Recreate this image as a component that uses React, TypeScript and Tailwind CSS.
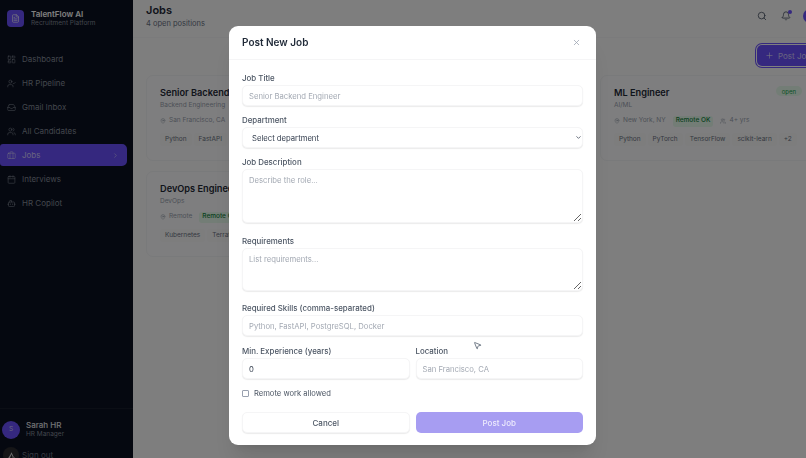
import { Bell, Bot, Briefcase, Calendar, ChevronDown, ChevronRight, FileText, Inbox, LayoutDashboard, MapPin, MousePointer2, Plus, Search, UserCheck, Users, X } from 'lucide-react';

const navItems = [
  { label: 'Dashboard', icon: LayoutDashboard },
  { label: 'HR Pipeline', icon: UserCheck },
  { label: 'Gmail Inbox', icon: Inbox },
  { label: 'All Candidates', icon: Users },
  { label: 'Jobs', icon: Briefcase, active: true },
  { label: 'Interviews', icon: Calendar },
  { label: 'HR Copilot', icon: Bot },
];

function Sidebar() {
  return (
    <aside className="w-[133px] h-[472px] shrink-0 bg-[#0a1020] flex flex-col">
      <div className="flex items-center gap-[7px] pl-[7px] h-[36px]">
        <div className="w-[17px] h-[17px] rounded-[4px] bg-[#6a50ff] flex items-center justify-center">
          <FileText size={9} className="text-white/80" />
        </div>
        <div>
          <div className="text-[8px] leading-[10px] font-semibold text-white">TalentFlow AI</div>
          <div className="text-[6.5px] leading-[9px] text-[#858c99]">Recruitment Platform</div>
        </div>
      </div>

      <nav className="flex-1 pt-[12px] pr-[6px]">
        {navItems.map((item) => (
          <div
            key={item.label}
            className={`h-[22px] mb-[2px] flex items-center gap-[6px] pl-[7px] pr-[8px] rounded-r-[5px] rounded-l-[3px] text-[8px] ${
              item.active ? 'bg-[#6a50ff] text-white/70' : 'text-[#858c99]'
            }`}
          >
            <item.icon size={9} strokeWidth={1.5} />
            <span className="flex-1">{item.label}</span>
            {item.active && <ChevronRight size={7} />}
          </div>
        ))}
      </nav>

      <div className="h-[64px] border-t border-white/5 pl-[2px]">
        <div className="flex items-center gap-[6px] pt-[11px]">
          <div className="w-[18px] h-[18px] rounded-full bg-[#6a50ff] text-white/70 text-[6.5px] flex items-center justify-center">S</div>
          <div>
            <div className="text-[8px] leading-[10px] font-medium text-gray-200">Sarah HR</div>
            <div className="text-[6.5px] leading-[9px] text-[#858c99]">HR Manager</div>
          </div>
        </div>
        <div className="flex items-center gap-[3px] mt-[8px]">
          <div className="w-[16px] h-[16px] rounded-full bg-[#2a2a2e] flex items-center justify-center ml-[1px]">
            <svg width="9" height="9" viewBox="0 0 12 12" fill="#d8d8d8">
              <path d="M6 1.5 9 8H7.6L6 4.4 3.9 9.5H1.5L4.6 4.5zM7 8.5h3.5v1.2H7z" />
            </svg>
          </div>
          <span className="text-[8px] text-gray-500">Sign out</span>
        </div>
      </div>
    </aside>
  );
}

function Tag({ children }: { children: React.ReactNode }) {
  return <span className="px-[5px] h-[13px] flex items-center rounded-[3px] bg-[#fafafa] text-[6.5px] text-gray-500">{children}</span>;
}

function JobCard({ title, dept, location, remote, years, tags, status }: { title: string; dept: string; location: string; remote?: boolean; years?: string; tags: string[]; status?: boolean }) {
  return (
    <div className="h-[86px] border border-gray-100 rounded-[7px] bg-[#fdfdfe] pl-[13px] pr-[12px] pt-[10px] whitespace-nowrap">
      <div className="flex justify-between items-start">
        <div className="text-[9.2px] leading-[13px] font-semibold text-[#1f2937]">{title}</div>
        {status && <span className="px-[6px] h-[10px] flex items-center rounded-full bg-[#e6fbec] text-[6px] text-[#16a34a]">open</span>}
      </div>
      <div className="text-[6.5px] leading-[10px] mt-[1px] text-gray-400">{dept}</div>
      <div className="flex items-center gap-[3px] mt-[5px] h-[12px] text-[6.5px] text-gray-400">
        <MapPin size={6} />
        <span>{location}</span>
        {remote && <span className="ml-[4px] mr-[4px] px-[3px] h-[11px] flex items-center rounded-[3px] bg-[#e6fbec] text-[#15803d] font-medium">Remote OK</span>}
        {years && (
          <>
            <Users size={6} />
            <span>{years}</span>
          </>
        )}
      </div>
      <div className="flex gap-[2px] mt-[6px]">
        {tags.map((t) => (
          <Tag key={t}>{t}</Tag>
        ))}
      </div>
    </div>
  );
}

function Main() {
  return (
    <main className="w-[690px] shrink-0 h-full bg-[#fcfcfd]">
      <header className="h-[38px] pl-[13px] pr-[6px] flex justify-between items-start border-b border-gray-100/60">
        <div>
          <h1 className="text-[11px] leading-[14px] pt-[3px] font-semibold text-[#1f2937]">Jobs</h1>
          <p className="text-[7.5px] leading-[10px] mt-[2px] text-gray-500">4 open positions</p>
        </div>
        <div className="flex items-center gap-[14px] pt-[9px] text-gray-600">
          <Search size={10} />
          <div className="relative">
            <Bell size={10} />
            <span className="absolute -top-[1px] right-[-1px] w-[4px] h-[4px] rounded-full bg-[#6a50ff]" />
          </div>
          <div className="w-[14px] h-[14px] -ml-[2px] rounded-full bg-[#6a50ff]" />
        </div>
      </header>
      <div className="flex justify-end pt-[7px] pr-[2px]">
        <button className="h-[21px] w-[64px] pl-[8px] rounded-[5px] bg-[#6a50ff] ring-1 ring-offset-1 ring-[#6a50ff] text-white/70 text-[8px] flex items-center gap-[4px] whitespace-nowrap">
          <Plus size={9} /> Post Job
        </button>
      </div>
      <div className="grid grid-cols-[215px_215px_215px] gap-x-[12px] gap-y-[10px] pl-[13px] mt-[9px]">
        <JobCard title="Senior Backend Engineer" dept="Backend Engineering" location="San Francisco, CA" tags={['Python', 'FastAPI']} />
        <div className="h-[86px] border border-gray-100 rounded-[7px] bg-[#fdfdfe]" />
        <JobCard title="ML Engineer" dept="AI/ML" location="New York, NY" remote years="4+ yrs" status tags={['Python', 'PyTorch', 'TensorFlow', 'scikit-learn', '+2']} />
        <JobCard title="DevOps Engineer" dept="DevOps" location="Remote" remote tags={['Kubernetes', 'Terraform']} />
      </div>
    </main>
  );
}

const labelCls = 'block h-[12px] leading-[12px] text-[7.9px] font-medium text-[#4b5563]';
const fieldCls = 'block w-full h-[21px] px-[6px] pt-[1px] rounded-[5px] border border-[#f5f5f6] shadow-[0_1px_1px_rgba(0,0,0,0.08)] bg-white text-[7.7px] text-[#374151] placeholder:text-[#a3a9b3] outline-none';
const areaCls = 'block w-full px-[6px] py-[5px] rounded-[5px] border border-[#f5f5f6] shadow-[0_1px_1px_rgba(0,0,0,0.08)] bg-white text-[7.7px] leading-[12px] placeholder:text-[#a3a9b3] outline-none';

function PostJobModal() {
  return (
    <div className="absolute inset-0 bg-black/50 backdrop-blur-[0.7px] flex justify-center items-start pl-[19px] pt-[26px]">
      <div className="w-[367px] h-[419px] bg-white rounded-[9px] shadow-xl">
        <div className="h-[34px] pl-[13px] pr-[15px] flex items-center justify-between border-b border-[#f5f5f6]">
          <h2 className="text-[10px] font-semibold text-[#1f2937]">Post New Job</h2>
          <X size={9} className="text-gray-400" />
        </div>
        <form className="px-[13px] pt-[12px]">
          <label className={labelCls}>Job Title</label>
          <input className={`${fieldCls} mt-[1px]`} placeholder="Senior Backend Engineer" />
          <label className={`${labelCls} mt-[8px]`}>Department</label>
          <div className="relative mt-[1px]">
            <select className={`${fieldCls} appearance-none pl-[9px] pt-[2px]`} defaultValue="">
              <option value="">Select department</option>
            </select>
            <ChevronDown size={7} strokeWidth={2.5} className="absolute right-[1px] top-[7px] text-[#374151]" />
          </div>
          <label className={`${labelCls} mt-[8px]`}>Job Description</label>
          <textarea className={`${areaCls} mt-[1px] h-[54px]`} placeholder="Describe the role..." />
          <label className={`${labelCls} mt-[12px]`}>Requirements</label>
          <textarea className={`${areaCls} mt-[1px] h-[43px]`} placeholder="List requirements..." />
          <label className={`${labelCls} mt-[11px]`}>Required Skills (comma-separated)</label>
          <input className={`${fieldCls} mt-[1px]`} placeholder="Python, FastAPI, PostgreSQL, Docker" />
          <div className="grid grid-cols-2 gap-[6px] mt-[9px]">
            <div>
              <label className={labelCls}>Min. Experience (years)</label>
              <input className={`${fieldCls} mt-[1px]`} defaultValue="0" />
            </div>
            <div>
              <label className={labelCls}>Location</label>
              <input className={`${fieldCls} mt-[1px]`} placeholder="San Francisco, CA" />
            </div>
          </div>
          <div className="flex items-center gap-[5px] h-[12px] mt-[9px]">
            <input type="checkbox" className="appearance-none w-[7px] h-[7px] m-0 -mt-[2px] border border-gray-400 rounded-[1px]" />
            <span className="text-[7.6px] text-[#4b5563]">Remote work allowed</span>
          </div>
          <div className="grid grid-cols-2 gap-[6px] mt-[12px]">
            <button type="button" className="h-[21px] rounded-[5px] border border-[#f5f5f6] shadow-[0_1px_1px_rgba(0,0,0,0.08)] bg-white text-[8px] font-medium text-[#4b5563]">Cancel</button>
            <button type="button" className="h-[21px] rounded-[5px] bg-[#a79df2] text-[8px] font-medium text-white/80">Post Job</button>
          </div>
        </form>
      </div>
      <MousePointer2 size={9} className="absolute left-[473px] top-[341px] text-gray-600 fill-white" />
    </div>
  );
}

export default function App() {
  return (
    <div className="relative h-screen overflow-hidden flex font-['Inter',sans-serif] blur-[0.35px]">
      <Sidebar />
      <Main />
      <PostJobModal />
    </div>
  );
}
